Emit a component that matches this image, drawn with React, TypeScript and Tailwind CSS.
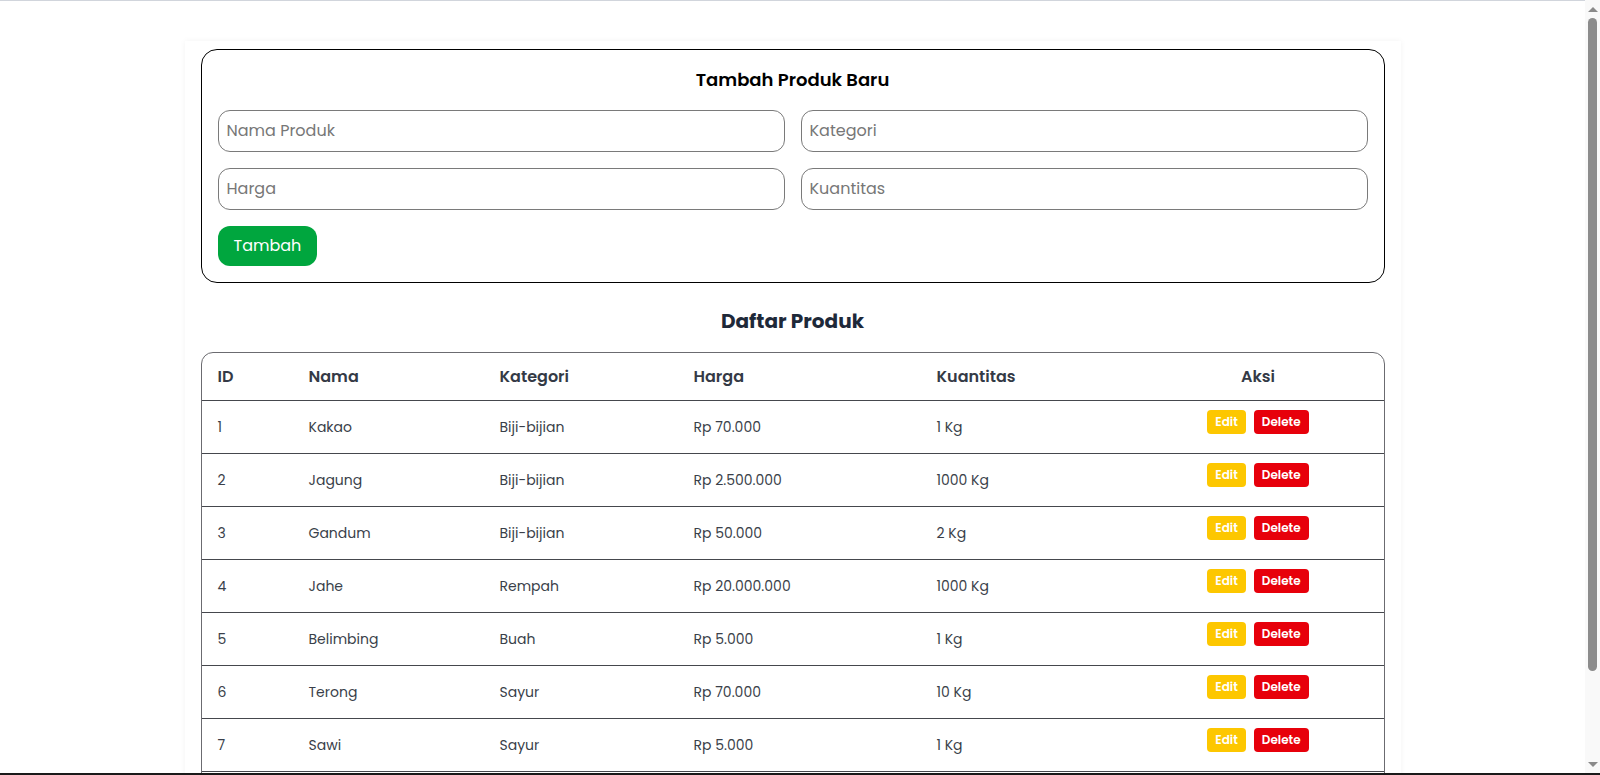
import React from 'react';

type Produk = {
  id: number;
  nama: string;
  kategori: string;
  harga: string;
  kuantitas: string;
};

const produk: Produk[] = [
  { id: 1, nama: 'Kakao', kategori: 'Biji-bijian', harga: 'Rp 70.000', kuantitas: '1 Kg' },
  { id: 2, nama: 'Jagung', kategori: 'Biji-bijian', harga: 'Rp 2.500.000', kuantitas: '1000 Kg' },
  { id: 3, nama: 'Gandum', kategori: 'Biji-bijian', harga: 'Rp 50.000', kuantitas: '2 Kg' },
  { id: 4, nama: 'Jahe', kategori: 'Rempah', harga: 'Rp 20.000.000', kuantitas: '1000 Kg' },
  { id: 5, nama: 'Belimbing', kategori: 'Buah', harga: 'Rp 5.000', kuantitas: '1 Kg' },
  { id: 6, nama: 'Terong', kategori: 'Sayur', harga: 'Rp 70.000', kuantitas: '10 Kg' },
  { id: 7, nama: 'Sawi', kategori: 'Sayur', harga: 'Rp 5.000', kuantitas: '1 Kg' },
  { id: 8, nama: 'Kunyit', kategori: 'Rempah', harga: 'Rp 15.000', kuantitas: '1 Kg' },
];

const inputCls =
  'w-full rounded-xl border border-[#7a7a7a] px-2 py-2 text-base text-gray-800 placeholder:text-[#777] outline-none';

function FakeScrollbar() {
  // page scrollbar as seen in the screenshot
  return (
    <div className="fixed right-0 top-0 flex h-full w-[15px] flex-col items-center bg-[#f9f9f9]">
      <div className="mt-[7px] h-0 w-0 border-x-[5px] border-b-[5px] border-x-transparent border-b-[#8a8a8a]" />
      <div className="mt-[6px] h-[653px] w-[9px] rounded-full bg-[#8c8c8c]" />
      <div className="flex-1" />
      <div className="mb-[8px] h-0 w-0 border-x-[5px] border-t-[5px] border-x-transparent border-t-[#8a8a8a]" />
    </div>
  );
}

export default function App() {
  return (
    <div className="min-h-screen border-t border-gray-300 bg-white pr-[15px] font-['Poppins','Inter',sans-serif]">
      <div className="mx-auto mt-10 w-[1216px] bg-white px-4 pb-10 pt-2 shadow-[0_0_6px_rgba(0,0,0,0.05)]">
        {/* Form tambah */}
        <div className="rounded-2xl border border-black px-4 py-4">
          <h2 className="mb-4 text-center text-lg font-semibold text-black">Tambah Produk Baru</h2>
          <div className="grid grid-cols-2 gap-4">
            <input className={inputCls} placeholder="Nama Produk" />
            <input className={inputCls} placeholder="Kategori" />
            <input className={inputCls} placeholder="Harga" />
            <input className={inputCls} placeholder="Kuantitas" />
          </div>
          <button className="mt-4 rounded-xl bg-green-600 px-4 py-2 text-base text-white">Tambah</button>
        </div>

        {/* Daftar */}
        <h2 className="mb-[17px] mt-6 text-center text-xl font-bold text-gray-800">Daftar Produk</h2>
        <div className="overflow-hidden rounded-xl border border-[#6b6b70]">
          <table className="w-full border-collapse text-left">
            <thead>
              <tr className="text-base font-semibold text-[#343a46]">
                <th className="w-[91px] px-4 pb-[11px] pt-3 font-semibold">ID</th>
                <th className="w-[191px] px-4 pb-[11px] pt-3 font-semibold">Nama</th>
                <th className="w-[194px] px-4 pb-[11px] pt-3 font-semibold">Kategori</th>
                <th className="w-[243px] px-4 pb-[11px] pt-3 font-semibold">Harga</th>
                <th className="w-[212px] px-4 pb-[11px] pt-3 font-semibold">Kuantitas</th>
                <th className="px-4 pb-[11px] pt-3 text-center font-semibold">Aksi</th>
              </tr>
            </thead>
            <tbody>
              {produk.map((p) => (
                <tr key={p.id} className="border-t border-[#45474d] text-sm text-[#3a3f4a]">
                  <td className="px-4 py-4">{p.id}</td>
                  <td className="px-4 py-4">{p.nama}</td>
                  <td className="px-4 py-4">{p.kategori}</td>
                  <td className="px-4 py-4">{p.harga}</td>
                  <td className="px-4 py-4">{p.kuantitas}</td>
                  <td className="px-4 pb-[19px] pt-[9px] align-top">
                    <div className="flex justify-center gap-2">
                      <button className="rounded bg-yellow-400 px-2 py-1 text-xs font-semibold text-white">Edit</button>
                      <button className="rounded bg-red-600 px-2 py-1 text-xs font-semibold text-white">Delete</button>
                    </div>
                  </td>
                </tr>
              ))}
            </tbody>
          </table>
        </div>
      </div>
      <FakeScrollbar />
      <div className="fixed bottom-0 left-0 h-[2px] w-full bg-[#1a1a1a]" />
    </div>
  );
}
